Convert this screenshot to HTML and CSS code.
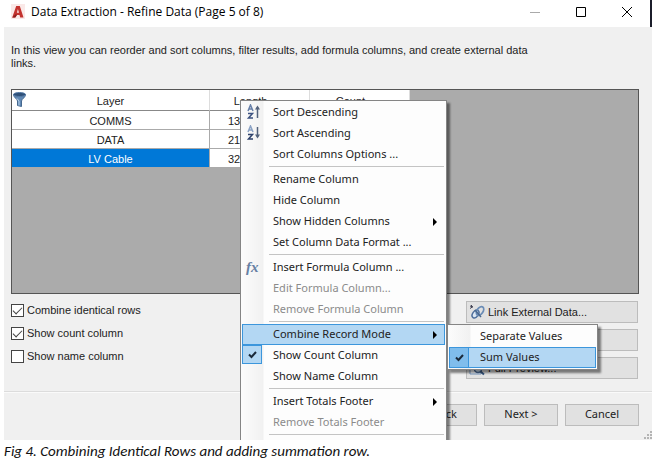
FILE: index.html
```html
<!DOCTYPE html>
<html lang="en">
<head>
<meta charset="utf-8">
<title>Data Extraction - Refine Data</title>
<link rel="stylesheet" href="styles.css">
</head>
<body>
<figure class="figure">
  <div class="dialog">
    <header class="titlebar">
      <svg class="logo" width="14" height="16" viewBox="0 0 14 16" aria-hidden="true">
        <rect width="14" height="15" fill="#fae9e8"/>
        <path d="M5.200 2h3.600L12.500 13.500H9.200L8.500 11H5.200L4.300 13.500H1.200z" fill="#c3322e"/>
        <path d="M6.900 5L8 8.800H5.900z" fill="#fae9e8"/>
        <path d="M1.200 13.500L5 10l1 1.200L4.300 13.500z" fill="#8e1c1c"/>
      </svg>
      <h1 class="title">Data Extraction - Refine Data (Page 5 of 8)</h1>
      <div class="window-controls">
        <button class="control control-muted" type="button" aria-label="Minimize"><svg width="10" height="10" viewBox="0 0 10 10"><path d="M0 5.500h10"/></svg></button>
        <button class="control" type="button" aria-label="Maximize"><svg width="10" height="10" viewBox="0 0 10 10"><path d="M.5.5h9v9h-9z"/></svg></button>
        <button class="control" type="button" aria-label="Close"><svg width="10" height="10" viewBox="0 0 10 10"><path d="M0 0l10 10M10 0L0 10"/></svg></button>
      </div>
    </header>

    <main class="content">
      <p class="intro">In this view you can reorder and sort columns, filter results, add formula columns, and create external data links.</p>

      <div class="grid">
        <table class="table">
          <thead>
            <tr>
              <th class="col-layer" scope="col">
                <svg class="filter" width="13" height="15" viewBox="0 0 13 15" aria-hidden="true">
                  <path d="M.5 2.500C.5 5.500 4.500 7 4.500 9v4.500l4 1V9c0-2 4-3.500 4-6.500z" fill="#6189b5" stroke="#45688f"/>
                  <path d="M4 6.500L6 9v4.500" fill="none" stroke="#b9d2ea"/>
                  <ellipse cx="6.500" cy="2.500" rx="6" ry="2" fill="#2f5078" stroke="#567ca7"/>
                </svg>Layer
              </th>
              <th class="sortable" scope="col">Length</th>
              <th class="sortable" scope="col">Count</th>
            </tr>
          </thead>
          <tbody>
            <tr><td>COMMS</td><td class="number">13</td><td></td></tr>
            <tr><td>DATA</td><td class="number">21</td><td></td></tr>
            <tr><td class="selected">LV Cable</td><td class="number">32</td><td></td></tr>
          </tbody>
        </table>
      </div>

      <div class="options">
        <div class="checks">
          <label class="check"><input type="checkbox" checked>Combine identical rows</label>
          <label class="check"><input type="checkbox" checked>Show count column</label>
          <label class="check"><input type="checkbox">Show name column</label>
        </div>
        <div class="actions">
          <button class="button action" type="button">
            <svg width="16" height="16" viewBox="0 0 16 16" fill="none" aria-hidden="true">
              <path d="M1 2l3 1M1 4.500l3-2M2.500 1v3" stroke="#445"/>
              <ellipse cx="6.500" cy="10" rx="2.800" ry="4.300" transform="rotate(35 6.500 10)" fill="#dce7f3" stroke="#4e6f9c" stroke-width="1.500"/>
              <ellipse cx="11" cy="7" rx="3" ry="4.800" transform="rotate(35 11 7)" stroke="#6a8cb6" stroke-width="1.800"/>
              <path d="M6 6l6 7" stroke="#49678e" stroke-width="1.500"/>
            </svg>Link External Data...
          </button>
          <button class="button action" type="button" aria-label="Refresh"></button>
          <button class="button action" type="button">
            <svg width="16" height="16" viewBox="0 0 16 16" fill="none" aria-hidden="true">
              <path d="M1 1h11v13H1z" fill="#f8fbff" stroke="#7898c0"/>
              <circle cx="9" cy="9" r="3.500" fill="#dcebfa" stroke="#4d6f9c" stroke-width="1.500"/>
              <path d="M11.500 11.500l3.500 3" stroke="#36557e" stroke-width="2"/>
            </svg>Full Preview...
          </button>
        </div>
      </div>
    </main>

    <footer class="footer">
      <button class="button nav" type="button">&lt; Back</button>
      <button class="button nav" type="button">Next &gt;</button>
      <button class="button nav" type="button">Cancel</button>
      <svg class="grip" width="9" height="9" viewBox="0 0 9 9" fill="#b4b4b4" aria-hidden="true"><path d="M7 0h2v2H7zM7 3h2v2H7zM7 6h2v2H7zM4 3h2v2H4zM4 6h2v2H4zM1 6h2v2H1z"/></svg>
    </footer>

    <div class="menu main-menu" role="menu">
      <button class="item" role="menuitem" type="button">
        <svg class="icon" width="16" height="16" viewBox="0 0 16 16" fill="none" aria-hidden="true">
          <path d="M2 7l2.500-6L7 7M3 5h3" stroke="#667fa8" stroke-width="1.500"/>
          <path d="M2 9.500h4.500L2.500 14H7" stroke="#3c5280" stroke-width="1.500"/>
          <path d="M11.500 14V3" stroke="#53627c" stroke-width="1.500"/><path d="M9 5.500l2.500-4L14 5.500z" fill="#53627c"/>
        </svg>Sort Descending</button>
      <button class="item" role="menuitem" type="button">
        <svg class="icon" width="16" height="16" viewBox="0 0 16 16" fill="none" aria-hidden="true">
          <path d="M2 7l2.500-6L7 7M3 5h3" stroke="#8ba2c4" stroke-width="1.500"/>
          <path d="M2 9.500h4.500L2.500 14H7" stroke="#2e426c" stroke-width="1.500"/>
          <path d="M11.500 2v10" stroke="#53627c" stroke-width="1.500"/><path d="M9 9.500l2.500 4 2.500-4z" fill="#53627c"/>
        </svg>Sort Ascending</button>
      <button class="item" role="menuitem" type="button">Sort Columns Options ...</button>
      <hr class="separator">
      <button class="item" role="menuitem" type="button">Rename Column</button>
      <button class="item" role="menuitem" type="button">Hide Column</button>
      <button class="item parent" role="menuitem" type="button">Show Hidden Columns</button>
      <button class="item" role="menuitem" type="button">Set Column Data Format ...</button>
      <hr class="separator">
      <button class="item" role="menuitem" type="button"><span class="icon fx" aria-hidden="true">fx</span>Insert Formula Column ...</button>
      <button class="item" role="menuitem" type="button" disabled>Edit Formula Column...</button>
      <button class="item" role="menuitem" type="button" disabled>Remove Formula Column</button>
      <hr class="separator">
      <button class="item parent active" role="menuitem" type="button">Combine Record Mode</button>
      <button class="item" role="menuitemcheckbox" aria-checked="true" type="button"><span class="tick"><svg width="9" height="8" viewBox="0 0 9 8"><path d="M1 3.500L3.500 6 8 1"/></svg></span>Show Count Column</button>
      <button class="item" role="menuitemcheckbox" aria-checked="false" type="button">Show Name Column</button>
      <hr class="separator">
      <button class="item parent" role="menuitem" type="button">Insert Totals Footer</button>
      <button class="item" role="menuitem" type="button" disabled>Remove Totals Footer</button>
      <hr class="separator">
    </div>

    <div class="menu submenu" role="menu">
      <button class="item" role="menuitemradio" aria-checked="false" type="button">Separate Values</button>
      <button class="item active" role="menuitemradio" aria-checked="true" type="button"><span class="tick"><svg width="9" height="8" viewBox="0 0 9 8"><path d="M1 3.500L3.500 6 8 1"/></svg></span>Sum Values</button>
    </div>
  </div>
  <figcaption class="caption">Fig 4. Combining Identical Rows and adding summation row.</figcaption>
</figure>
</body>
</html>
```
FILE: styles.css
```css
* {
  box-sizing: border-box;
}

body {
  margin: 0;
  background: #fff;
  color: #222;
  font: 11px/13px "Liberation Sans", Arial, sans-serif;
}

button {
  font: inherit;
  color: inherit;
}

.figure {
  margin: 0;
}

.dialog {
  position: relative;
  overflow: hidden;
}

.titlebar {
  display: flex;
  align-items: center;
  height: 27px;
  padding: 0 10px 4px 11px;
  border-right: 2px solid #1b1d2a;
}

.title {
  margin: 0 0 0 6px;
  font: 12px/16px "Open Sans", "Noto Sans", sans-serif;
  color: #000;
}

.window-controls {
  display: flex;
  gap: 20px;
  margin-left: auto;
}

.control {
  display: grid;
  place-items: center;
  width: 26px;
  height: 22px;
  padding: 0;
  border: 0;
  background: none;
}

.control path {
  fill: none;
  stroke: #000;
}

.control-muted path {
  stroke: #aaa;
}

.content {
  margin-left: 4px;
  padding: 17px 13px 12px 7px;
  background: #f0f0f0;
}

.intro {
  max-width: 540px;
  margin: 0 0 19px;
}

.grid {
  height: 205px;
  border: 1px solid #555;
  background: #ababab;
}

.table {
  width: 398px;
  table-layout: fixed;
  border-collapse: separate;
  border-spacing: 0;
  background: #fff;
}

.table th,
.table td {
  height: 19px;
  padding: 1px 0 0;
  border-right: 1px solid #aaa;
  border-bottom: 1px solid #aaa;
  font-size: 11px;
  font-weight: 400;
  line-height: 16px;
  text-align: center;
}

.table th {
  height: 21px;
  border-right-color: #ddd;
  border-bottom-color: #888;
}

.table .col-layer {
  position: relative;
  width: 198px;
}

.table .sortable {
  padding-right: 18px;
}

.filter {
  position: absolute;
  left: 1px;
  top: 2px;
}

.table .number {
  padding-left: 18px;
  text-align: left;
}

.table .selected {
  background: #0078d7;
  color: #fff;
}

.options {
  display: flex;
  justify-content: space-between;
  padding: 7px 1px 0 0;
}

.checks {
  display: flex;
  flex-direction: column;
  gap: 10px;
  padding-top: 3px;
}

.check {
  display: flex;
  align-items: center;
  gap: 3px;
}

.check input {
  appearance: none;
  width: 13px;
  height: 13px;
  margin: 0;
  border: 1px solid #444;
  background: #fff;
}

.check input:checked::before {
  content: "";
  display: block;
  width: 8px;
  height: 4px;
  margin: 2px 1px;
  border: solid #444;
  border-width: 0 0 1px 1px;
  transform: rotate(-45deg);
}

.actions {
  display: grid;
  gap: 6px;
  width: 172px;
}

.button {
  height: 22px;
  border: 1px solid #bcbcbc;
  background: #e1e1e1;
}

.action {
  display: flex;
  align-items: center;
  gap: 3px;
  padding: 0 2px;
}

.footer {
  position: relative;
  display: flex;
  justify-content: flex-end;
  gap: 7px;
  margin-left: 4px;
  padding: 12px 13px 14px;
  border-top: 1px solid #dcdcdc;
  background: #f0f0f0;
  box-shadow: inset 0 1px #fafafa;
}

.nav {
  width: 74px;
  padding: 0 0 2px;
  font: 11px/16px "Noto Sans", "Open Sans", sans-serif;
}

.grip {
  position: absolute;
  right: 0;
  bottom: 0;
}

.menu {
  position: absolute;
  width: 207px;
  padding: 1px;
  border: 1px solid #858585;
  background: linear-gradient(90deg, #fcfcfc, #f1f1f1 22px, #fdfdfd 23px);
  box-shadow: 3px 3px 2px #0007;
  font: 11px/16px "Noto Sans", "Open Sans", sans-serif;
}

.main-menu {
  left: 240px;
  top: 100px;
  padding-bottom: 12px;
}

.submenu {
  left: 447px;
  top: 324px;
  width: 151px;
}

.item {
  position: relative;
  display: block;
  width: 100%;
  height: 21px;
  padding: 0 0 2px 30px;
  border: 1px solid transparent;
  background: none;
  text-align: left;
  white-space: nowrap;
}

.item:disabled {
  color: #8b8b8b;
}

.item.active {
  border-color: #3c96dc;
  background: #b3d7f3;
}

.parent::after {
  content: "";
  position: absolute;
  right: 7px;
  top: 6px;
  border: solid transparent;
  border-width: 4px 0 4px 4px;
  border-left-color: #000;
}

.icon {
  position: absolute;
  left: 3px;
  top: 1px;
}

.fx {
  font: italic 700 15px/16px "Liberation Serif", serif;
  color: #6680a4;
}

.tick {
  position: absolute;
  left: -1px;
  top: -1px;
  display: grid;
  place-items: center;
  width: 20px;
  height: 19px;
  border: 1px solid #3c96dc;
  background: #b3d7f3;
}

.active .tick {
  height: 21px;
  background: #80bdec;
}

.tick path {
  fill: none;
  stroke: #1b2a3a;
  stroke-width: 2;
}

.separator {
  height: 1px;
  margin: 1px 1px 2px 27px;
  border: 0;
  background: #c4c4c4;
}

.caption {
  padding: 2px 4px;
  font: italic 15px/18px Carlito, Lato, sans-serif;
  color: #111;
}
```
